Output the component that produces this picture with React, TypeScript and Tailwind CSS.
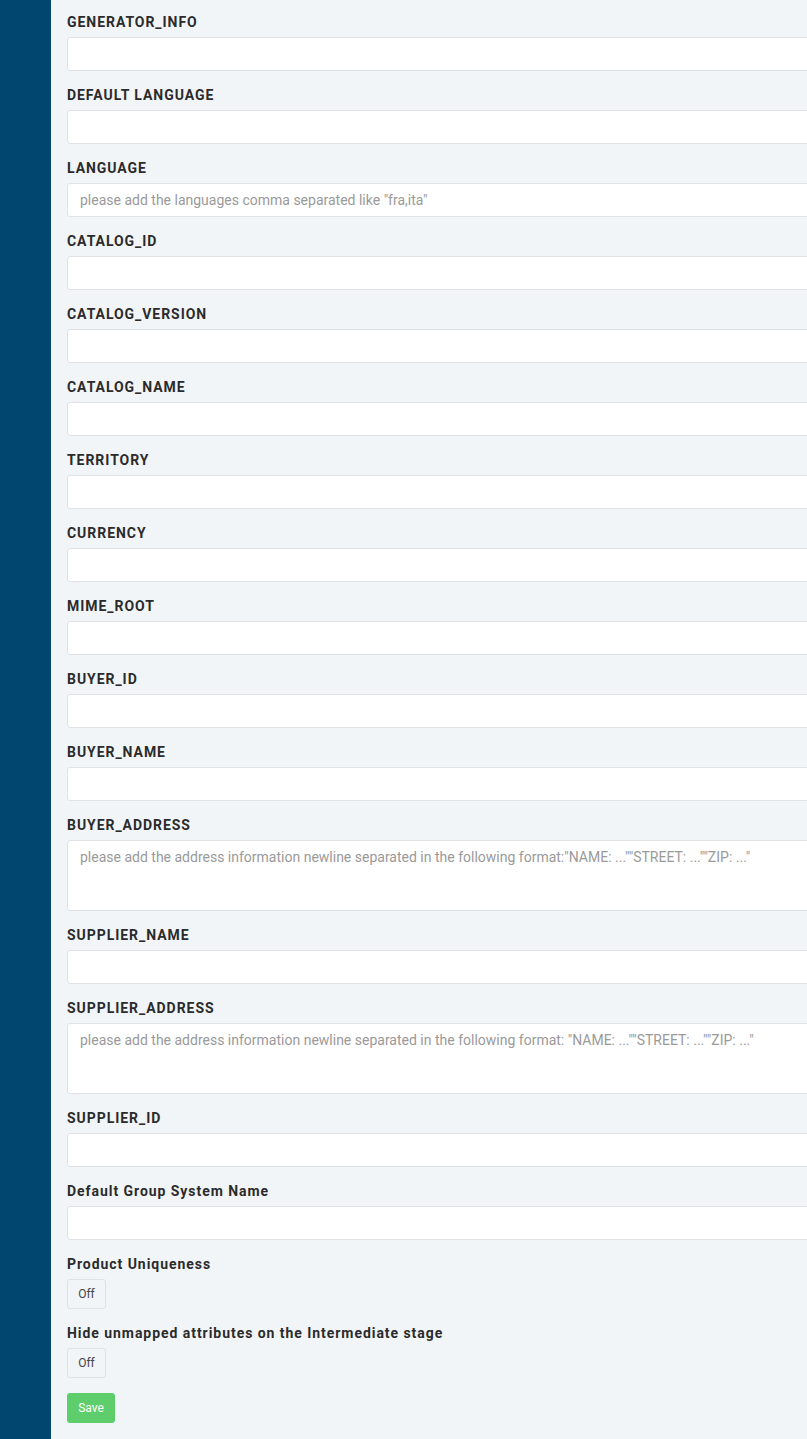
import type { ReactNode } from 'react'

type Field = { label: string; placeholder?: string; multiline?: boolean }

const fields: Field[] = [
  { label: 'GENERATOR_INFO' },
  { label: 'DEFAULT LANGUAGE' },
  { label: 'LANGUAGE', placeholder: 'please add the languages comma separated like "fra,ita"' },
  { label: 'CATALOG_ID' },
  { label: 'CATALOG_VERSION' },
  { label: 'CATALOG_NAME' },
  { label: 'TERRITORY' },
  { label: 'CURRENCY' },
  { label: 'MIME_ROOT' },
  { label: 'BUYER_ID' },
  { label: 'BUYER_NAME' },
  {
    label: 'BUYER_ADDRESS',
    multiline: true,
    placeholder: 'please add the address information newline separated in the following format:"NAME: ...""STREET: ...""ZIP: ..."',
  },
  { label: 'SUPPLIER_NAME' },
  {
    label: 'SUPPLIER_ADDRESS',
    multiline: true,
    placeholder: 'please add the address information newline separated in the following format: "NAME: ...""STREET: ...""ZIP: ..."',
  },
  { label: 'SUPPLIER_ID' },
  { label: 'Default Group System Name' },
]

function Group({ label, children }: { label: string; children: ReactNode }) {
  return (
    <div className="mb-[14px]">
      <label className="block text-[14px] leading-5 font-bold tracking-[0.95px] text-[#2b2b2b] mb-[5px]">{label}</label>
      {children}
    </div>
  )
}

function Toggle() {
  return (
    <button
      type="button"
      className="w-[39px] h-[30px] rounded-[3px] border border-[#dde2e7] bg-[#f2f5f8] text-[12px] text-[#444]"
    >
      Off
    </button>
  )
}

export default function App() {
  return (
    <div className="flex min-h-screen w-full overflow-hidden bg-[#f2f5f8] font-['Roboto',sans-serif]">
      <aside className="w-[51px] shrink-0 bg-[#00466e]" />
      <main className="flex-1 pl-4 pt-3 min-w-0">
        {fields.map((f) => (
          <Group key={f.label} label={f.label}>
            {f.multiline ? (
              <textarea
                placeholder={f.placeholder}
                className="block w-[780px] h-[71px] resize-none rounded-[3px] border border-[#dfe3e8] bg-white px-3 py-[6px] text-[14px] leading-5 placeholder:text-[#9a9a9a] outline-none"
              />
            ) : (
              <input
                placeholder={f.placeholder}
                className="block w-[780px] h-[34px] rounded-[3px] border border-[#dfe3e8] bg-white px-3 text-[14px] placeholder:text-[#9a9a9a] outline-none"
              />
            )}
          </Group>
        ))}
        <Group label="Product Uniqueness">
          <Toggle />
        </Group>
        <Group label="Hide unmapped attributes on the Intermediate stage">
          <Toggle />
        </Group>
        <button
          type="button"
          className="mt-[1px] w-[48px] h-[30px] rounded-[3px] bg-[#5ecd6c] text-[12px] text-white"
        >
          Save
        </button>
      </main>
    </div>
  )
}
